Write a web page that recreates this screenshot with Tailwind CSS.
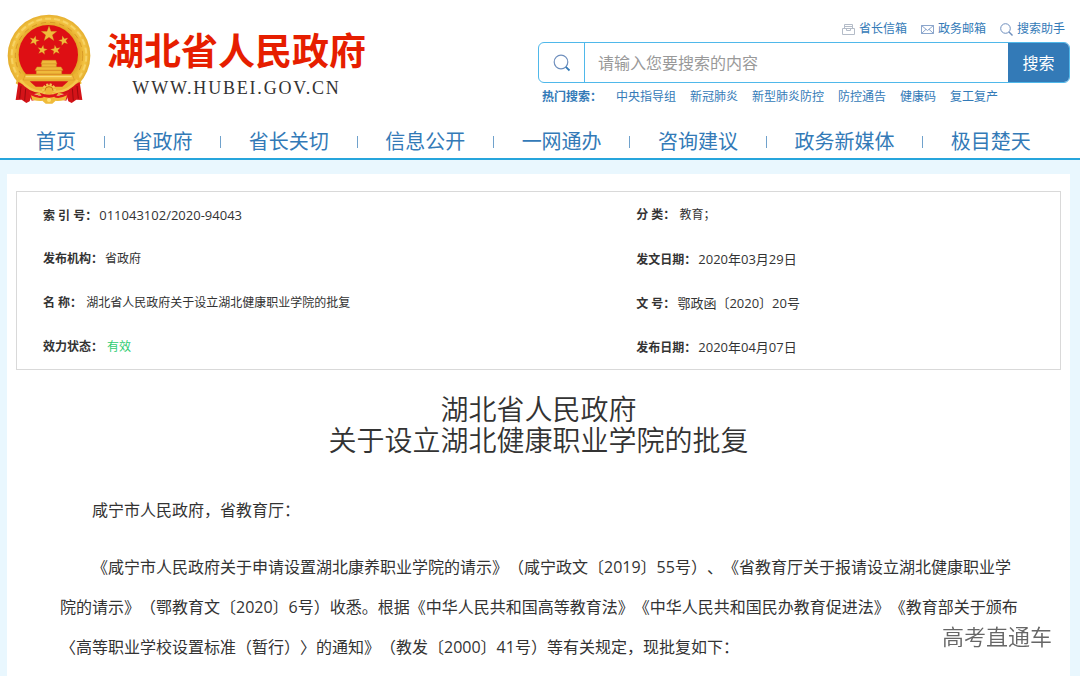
<!DOCTYPE html>
<html lang="zh-CN">
  <head>
    <meta charset="UTF-8" />
    <meta name="viewport" content="width=device-width, initial-scale=1.0" />
    <title>湖北省人民政府</title>
    <script src="https://cdn.jsdelivr.net/npm/@tailwindcss/browser@4"></script>
    <style>
      body {
        font-family: "Open Sans", "Noto Sans CJK SC", sans-serif;
        text-spacing-trim: space-all;
      }
    </style>
  </head>
  <body class="min-h-screen flex flex-col bg-white text-[#333]">
    <header>
      <div class="flex justify-between pl-[7px] pr-[10px]">
        <a href="#" class="flex items-start gap-4 pt-[14px]">
          <!-- emblem -->
          <svg class="w-[84px] h-[90px]" viewBox="20 28 252 270" role="img" aria-label="国徽">
            <defs>
              <radialGradient id="gold" cx="146" cy="152" r="126" gradientUnits="userSpaceOnUse">
                <stop offset=".7" stop-color="#e3a526" />
                <stop offset=".86" stop-color="#f3c443" />
                <stop offset="1" stop-color="#e2aa2a" />
              </radialGradient>
              <polygon id="star" points="0,-25 6,-8 24,-8 10,3 15,20 0,10 -15,20 -10,3 -24,-8 -6,-8" />
            </defs>
            <ellipse cx="146" cy="153" rx="124" ry="123" fill="url(#gold)" />
            <ellipse cx="146" cy="153" rx="112" ry="111" fill="none" stroke="#fbe07d" stroke-opacity=".6" stroke-width="6" stroke-dasharray="18 9" />
            <ellipse cx="146" cy="153" rx="101" ry="100" fill="none" stroke="#cb861a" stroke-opacity=".6" stroke-width="3" stroke-dasharray="16 12" />
            <circle cx="144" cy="150" r="89" fill="#de0f14" />
            <path d="M58 205L75 212L69 226H222L216 212L232 205L244 236L214 256L170 268H122L76 256L46 236Z" fill="#edb534" />
            <path d="M88 230H204L186 246H106Z" fill="#d91116" />
            <g fill="#f0bb3c" stroke="#b96b0c" stroke-width=".8">
              <use href="#star" x="146" y="88" />
              <use href="#star" transform="translate(102 108) rotate(15) scale(.62)" />
              <use href="#star" transform="translate(190 108) rotate(-15) scale(.62)" />
              <use href="#star" transform="translate(126 136) rotate(10) scale(.62)" />
              <use href="#star" transform="translate(166 136) rotate(-10) scale(.62)" />
            </g>
            <!-- gate -->
            <g fill="#efb93b" stroke="#cf8c20" stroke-width="1.5">
              <path d="M126 167H166L170 178H122Z" />
              <path d="M124 178H168V187H124Z" />
              <path d="M110 187H182L188 197H104Z" />
              <path d="M108 197H184V208H108Z" />
              <path d="M75 209H216L222 226H69Z" />
            </g>
            <path d="M76 216H214" stroke="#fde17d" stroke-width="3" />
            <!-- ribbons -->
            <path d="M54 232L76 244L102 258L122 262L94 270L88 290L78 295L64 285L46 286Z" fill="#d41318" />
            <path d="M238 232L216 244L190 258L170 262L198 270L204 290L214 295L228 285L246 286Z" fill="#d41318" />
            <path d="M62 244L58 282M76 252L73 288M230 244L234 282M216 252L219 288" stroke="#9c0a0e" stroke-width="3" />
            <path d="M86 262Q146 290 206 262L198 288Q146 274 94 288Z" fill="#e01a1c" />
            <path d="M60 226Q88 262 126 262M232 226Q204 262 166 262" fill="none" stroke="#f5c84c" stroke-width="8" />
            <path d="M92 272Q118 286 132 276Q146 268 160 276Q174 286 200 272L196 286Q174 290 166 288L156 297H136L126 288Q118 290 96 286Z" fill="#f0bb3a" />
            <circle cx="146" cy="257" r="17" fill="#efb536" stroke="#f3c650" stroke-width="8" stroke-dasharray="6 4" />
            <path d="M134 258A12 12 0 0 1 158 258" fill="none" stroke="#c97d12" stroke-width="3" />
            <path d="M118 264Q146 276 174 264L168 274Q146 284 124 274Z" fill="#de171a" />
            <circle cx="146" cy="286" r="6" fill="#ffdf70" />
          </svg>
          <div class="flex flex-col items-center pt-[15px]">
            <span class="text-[37px] leading-[44px] font-bold text-[#e61e00]">湖北省人民政府</span>
            <span class="font-['Liberation_Serif',serif] text-lg leading-[30px] tracking-widest">WWW.HUBEI.GOV.CN</span>
          </div>
        </a>

        <div class="w-[532px] pt-5 text-xs text-[#337ab7]">
          <div class="flex justify-end gap-[14px] pr-[5px] leading-[18px]">
            <a href="#" class="flex items-center gap-1">
              <svg class="w-[13px] h-[13px]" viewBox="0 0 13 13" fill="none" stroke="#b4bcc8">
                <path d="M2.500 5V1.500H10.500V5M.5 5.500H12.500V11.500H.5ZM4.500 6V7.500H8.500V6M2.500 3.500H10.500" />
              </svg>
              省长信箱
            </a>
            <a href="#" class="flex items-center gap-1">
              <svg class="w-[13px] h-[13px]" viewBox="0 0 13 13" fill="none" stroke="#7f9cc6" stroke-width=".9">
                <path d="M.5 2.500H12.500V10.500H.5ZM.5 2.500L6.500 7.500L12.500 2.500M.5 10.500L5 6.300M12.500 10.500L8 6.300" />
              </svg>
              政务邮箱
            </a>
            <a href="#" class="flex items-center gap-1">
              <svg class="w-[13px] h-[13px]" viewBox="0 0 13 13" fill="none" stroke="#6f8fbd">
                <circle cx="5.500" cy="5.500" r="4.800" />
                <path d="M9 9L12.500 12.500" stroke-width="1.400" />
              </svg>
              搜索助手
            </a>
          </div>

          <form class="mt-1 flex h-[41px] rounded-md border border-[#4fb8ea] overflow-hidden text-base">
            <label for="keyword" class="w-[46px] flex items-center justify-center border-r border-[#4fb8ea]">
              <svg class="w-[18px] h-[18px]" viewBox="0 0 18 18" fill="none" stroke="#6f8fbd" stroke-width="1.200">
                <circle cx="8" cy="8" r="6.800" />
                <path d="M12.800 12.800L16.500 16.500" stroke="#337ab7" stroke-width="1.800" />
              </svg>
            </label>
            <input id="keyword" type="text" aria-label="搜索" placeholder="请输入您要搜索的内容" class="flex-1 min-w-0 px-[13px] outline-none placeholder:text-[#999]" />
            <button type="button" class="w-[61px] bg-[#337ab7] text-white">搜索</button>
          </form>

          <div class="mt-1 flex gap-[14px] pl-1 leading-5">
            <b>热门搜索：</b>
            <a href="#">中央指导组</a>
            <a href="#">新冠肺炎</a>
            <a href="#">新型肺炎防控</a>
            <a href="#">防控通告</a>
            <a href="#">健康码</a>
            <a href="#">复工复产</a>
          </div>
        </div>
      </div>

      <nav class="mt-4 flex items-center justify-between pt-[5px] pb-[2px] pl-9 pr-[49px] border-b-2 border-[#26a5dc] text-xl leading-[28px] text-[#337ab7]">
        <a href="#">首页</a>
        <span class="w-px h-3 bg-[#337ab7]/70"></span>
        <a href="#">省政府</a>
        <span class="w-px h-3 bg-[#337ab7]/70"></span>
        <a href="#">省长关切</a>
        <span class="w-px h-3 bg-[#337ab7]/70"></span>
        <a href="#">信息公开</a>
        <span class="w-px h-3 bg-[#337ab7]/70"></span>
        <a href="#">一网通办</a>
        <span class="w-px h-3 bg-[#337ab7]/70"></span>
        <a href="#">咨询建议</a>
        <span class="w-px h-3 bg-[#337ab7]/70"></span>
        <a href="#">政务新媒体</a>
        <span class="w-px h-3 bg-[#337ab7]/70"></span>
        <a href="#">极目楚天</a>
      </nav>
    </header>

    <main class="flex-1 flex bg-[#e9f7fe] pt-[14px] pl-[7px] pr-[10px]">
      <article class="flex-1 bg-white pt-[17px]">
        <dl class="mx-[9px] pt-px pl-[26px] grid grid-cols-[7fr_5fr] border border-[#d9d9d9] text-xs leading-[44px]">
          <div class="flex items-baseline gap-0.5 h-11"><dt class="font-bold">索 引 号：</dt><dd class="text-[13px]">011043102/2020-94043</dd></div>
          <div class="flex items-baseline gap-1 h-11"><dt class="font-bold">分 类：</dt><dd>教育；</dd></div>
          <div class="flex items-baseline gap-0.5 h-11"><dt class="font-bold">发布机构：</dt><dd>省政府</dd></div>
          <div class="flex items-baseline gap-0.5 h-11"><dt class="font-bold">发文日期：</dt><dd class="text-[13px]">2020年03月29日</dd></div>
          <div class="flex items-baseline gap-1 h-11"><dt class="font-bold">名 称：</dt><dd>湖北省人民政府关于设立湖北健康职业学院的批复</dd></div>
          <div class="flex items-baseline gap-0.5 h-11"><dt class="font-bold">文 号：</dt><dd class="text-[13px]">鄂政函〔2020〕20号</dd></div>
          <div class="flex items-baseline gap-1 h-11"><dt class="font-bold">效力状态：</dt><dd class="text-[#2ecc71]">有效</dd></div>
          <div class="flex items-baseline gap-0.5 h-11"><dt class="font-bold">发布日期：</dt><dd class="text-[13px]">2020年04月07日</dd></div>
        </dl>

        <h1 class="mt-6 text-center text-[28px] leading-[31px] font-[350]">湖北省人民政府<br />关于设立湖北健康职业学院的批复</h1>

        <div class="mt-[34px] pl-[53px] pr-[50px] text-base leading-10">
          <p class="indent-8">咸宁市人民政府，省教育厅：</p>
          <p class="mt-[17px] indent-8">《咸宁市人民政府关于申请设置湖北康养职业学院的请示》（咸宁政文〔2019〕55号）、《省教育厅关于报请设立湖北健康职业学院的请示》（鄂教育文〔2020〕6号）收悉。根据《中华人民共和国高等教育法》《中华人民共和国民办教育促进法》《教育部关于颁布〈高等职业学校设置标准（暂行）〉的通知》（教发〔2000〕41号）等有关规定，现批复如下：</p>
        </div>
      </article>
    </main>

    <div class="fixed right-7 bottom-6 text-[22px] leading-8 font-[350] text-[#666] text-shadow-[0_0_2px_#fff]">高考直通车</div>
  </body>
</html>
